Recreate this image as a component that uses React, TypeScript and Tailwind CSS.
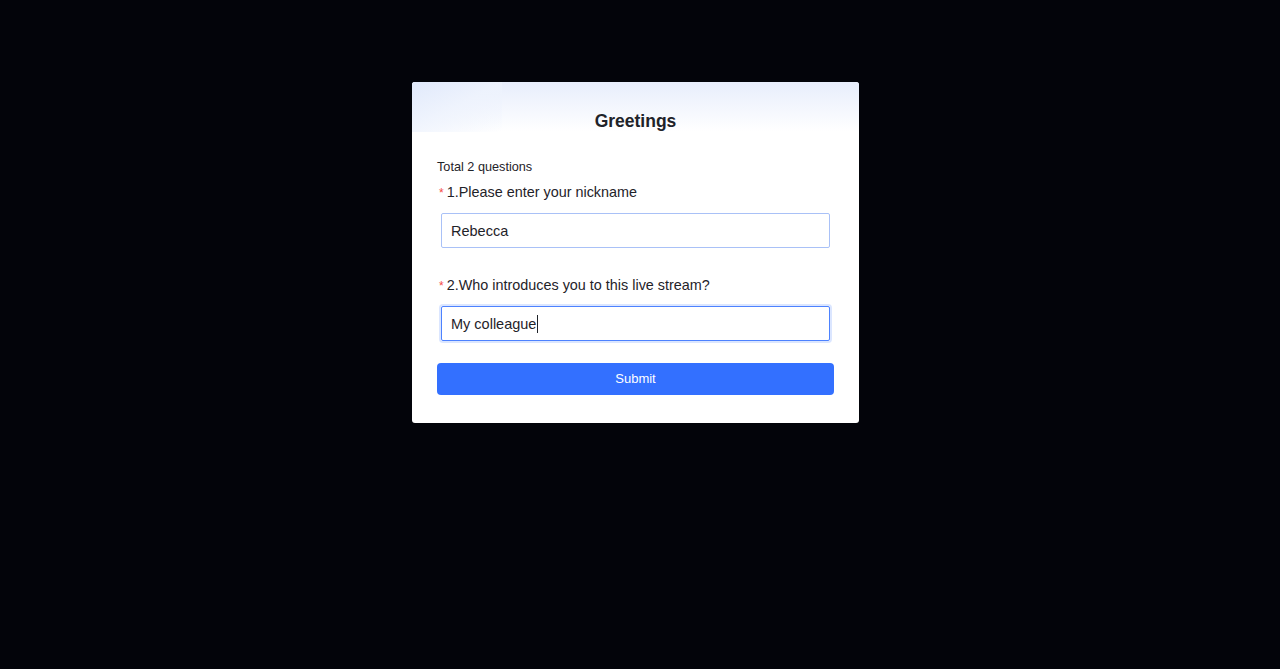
import { useState } from "react";

export default function App() {
  const [nickname, setNickname] = useState("Rebecca");
  const [referrer, setReferrer] = useState("My colleague");

  return (
    <div
      className="min-h-screen w-full bg-[#03040a] pr-[9px] pt-[82px]"
      style={{ fontFamily: '"Liberation Sans", Arial, sans-serif' }}
    >
      <div className="mx-auto w-[447px] overflow-hidden rounded-[3px] bg-white">
        {/* Header */}
        <div className="relative flex h-[50px] items-end justify-center bg-gradient-to-b from-[#e8eefc] to-white">
          <div className="pointer-events-none absolute left-0 top-0 h-[50px] w-[90px] bg-gradient-to-br from-[#dfe8fb] via-[#eef3fd] to-transparent opacity-80" />
          <h1 className="relative translate-y-[1px] text-[17.5px] font-bold leading-[24px] text-[#1f2329]">Greetings</h1>
        </div>

        {/* Body */}
        <div className="px-[25px] pb-[28px] pt-[27px]">
          <p className="text-[12.7px] leading-[16px] text-[#1f2329]">Total 2 questions</p>

          <div className="mt-[8px]">
            <label className="flex items-baseline text-[14.4px] leading-[18px] text-[#1f2329]">
              <span className="ml-[2px] mr-[3px] text-[12px] text-[#f54a45]">*</span>
              1.Please enter your nickname
            </label>
            <div className="mt-[11px] px-[4px]">
              <input
                value={nickname}
                onChange={(e) => setNickname(e.target.value)}
                className="h-[35px] w-full rounded-[2px] border border-[#a9c1f7] px-[9px] text-[14.5px] text-[#1f2329] outline-none"
              />
            </div>
          </div>

          <div className="mt-[28px]">
            <label className="flex items-baseline text-[14.4px] leading-[18px] text-[#1f2329]">
              <span className="ml-[2px] mr-[3px] text-[12px] text-[#f54a45]">*</span>
              2.Who introduces you to this live stream?
            </label>
            <div className="mt-[11px] px-[4px]">
              <div className="relative">
                <input
                  value={referrer}
                  onChange={(e) => setReferrer(e.target.value)}
                  className="h-[35px] w-full rounded-[2px] border-[1.5px] border-[#4d82ff] px-[9px] text-[14.5px] text-[#1f2329] shadow-[0_0_0_2px_rgba(77,130,255,0.2)] outline-none"
                />
                {/* caret */}
                <span className="pointer-events-none absolute left-[96px] top-[9px] h-[18px] w-px bg-[#1f2329]" />
              </div>
            </div>
          </div>

          <button className="mt-[22px] h-[32px] w-full rounded-[4px] bg-[#3370ff] text-[13px] text-white">
            Submit
          </button>
        </div>
      </div>
    </div>
  );
}
